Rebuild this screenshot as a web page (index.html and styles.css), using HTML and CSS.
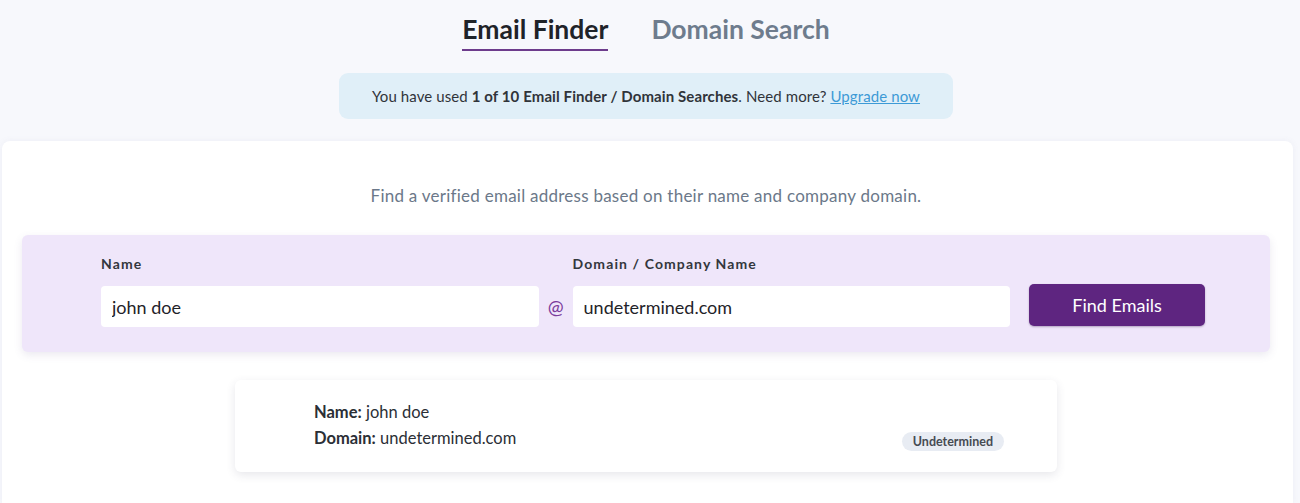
FILE: index.html
```html
<!DOCTYPE html>
<html lang="en">

<head>
    <meta charset="UTF-8">
    <meta name="viewport" content="width=device-width, initial-scale=1.0">
    <title>Email Finder</title>
    <link rel="stylesheet" href="styles.css">
</head>

<body>
    <header class="top">
        <nav class="tabs">
            <a class="tab active" href="#">Email Finder</a>
            <a class="tab" href="#">Domain Search</a>
        </nav>
        <div class="usage">
            You have used <b>1 of 10 Email Finder / Domain Searches</b>. Need more? <a href="#">Upgrade now</a>
        </div>
    </header>

    <main class="card">
        <p class="intro">Find a verified email address based on their name and company domain.</p>

        <form class="finder">
            <div class="field">
                <label for="name">Name</label>
                <input type="text" id="name" value="john doe">
            </div>
            <span class="at">@</span>
            <div class="field">
                <label for="domain">Domain / Company Name</label>
                <input type="text" id="domain" value="undetermined.com">
            </div>
            <button type="button">Find Emails</button>
        </form>

        <div class="result">
            <div class="info">
                <p><b>Name:</b> john doe</p>
                <p><b>Domain:</b> undetermined.com</p>
            </div>
            <span class="badge">Undetermined</span>
        </div>
    </main>
</body>

</html>
```

FILE: styles.css
```css
body {
    margin: 0;
    background: #f7f8fc;
    font-family: Lato, "Noto Sans", sans-serif;
    color: #2b2f36;
}

.top {
    display: flex;
    flex-direction: column;
    align-items: center;
    padding-top: 13px;
    padding-right: 8px;
}

.tabs {
    display: flex;
    gap: 43px;
}

.tab {
    font-size: 26.5px;
    font-weight: 700;
    color: #6e7c8d;
    text-decoration: none;
    padding-bottom: 4px;
    border-bottom: 2px solid transparent;
}

.tab.active {
    color: #1f2329;
    border-bottom-color: #6d3c8c;
}

.usage {
    margin-top: 22px;
    width: 614px;
    height: 46px;
    line-height: 46px;
    text-align: center;
    background: #e0eff8;
    border-radius: 9px;
    font-size: 15px;
    letter-spacing: 0.1px;
    color: #30343a;
}

.usage a {
    color: #3d9ad6;
}

.card {
    margin: 22px 7px 0 2px;
    background: #fff;
    border-radius: 8px 8px 0 0;
    padding: 44px 23px 31px 20px;
    box-shadow: 0 0 6px rgba(120, 120, 160, 0.08);
}

.intro {
    margin: 0 0 29px;
    text-align: center;
    font-size: 17px;
    letter-spacing: 0.25px;
    color: #6b7889;
}

.finder {
    display: flex;
    align-items: flex-end;
    background: #efe6fa;
    border-radius: 6px;
    padding: 20px 65px 25px 79px;
    box-shadow: 0 3px 8px rgba(90, 70, 130, 0.12);
}

.field {
    display: flex;
    flex-direction: column;
    width: 438px;
}

.field label {
    font-size: 14px;
    font-weight: 700;
    letter-spacing: 1.1px;
    color: #33373d;
    margin-bottom: 14px;
}

.field input {
    height: 41px;
    box-sizing: border-box;
    border: none;
    border-radius: 4px;
    padding: 0 11px;
    font-family: inherit;
    font-size: 18px;
    color: #1f2329;
    background: #fff;
}

.at {
    width: 34px;
    height: 41px;
    display: flex;
    align-items: center;
    justify-content: center;
    color: #7b3c9c;
    font-size: 19px;
}

.finder button {
    margin-left: 19px;
    width: 176px;
    height: 42px;
    margin-bottom: 1px;
    border: none;
    border-radius: 5px;
    background: #5e2580;
    color: #fff;
    font-family: inherit;
    font-size: 18px;
    box-shadow: 0 1px 2px rgba(40, 10, 60, 0.3);
}

.result {
    width: 822px;
    height: 92px;
    box-sizing: border-box;
    margin: 28px auto 0;
    display: flex;
    align-items: flex-start;
    justify-content: space-between;
    padding: 22px 53px 0 79px;
    background: #fff;
    border-radius: 6px;
    box-shadow: 0 3px 10px rgba(60, 60, 90, 0.12);
}

.info p {
    margin: 0 0 5px;
    font-size: 16.5px;
    line-height: 21px;
    color: #2b2f36;
}

.badge {
    margin-top: 30px;
    padding: 2px 11px;
    border-radius: 10px;
    background: #e8ecf3;
    font-size: 12.5px;
    font-weight: 700;
    color: #464b52;
}
```
